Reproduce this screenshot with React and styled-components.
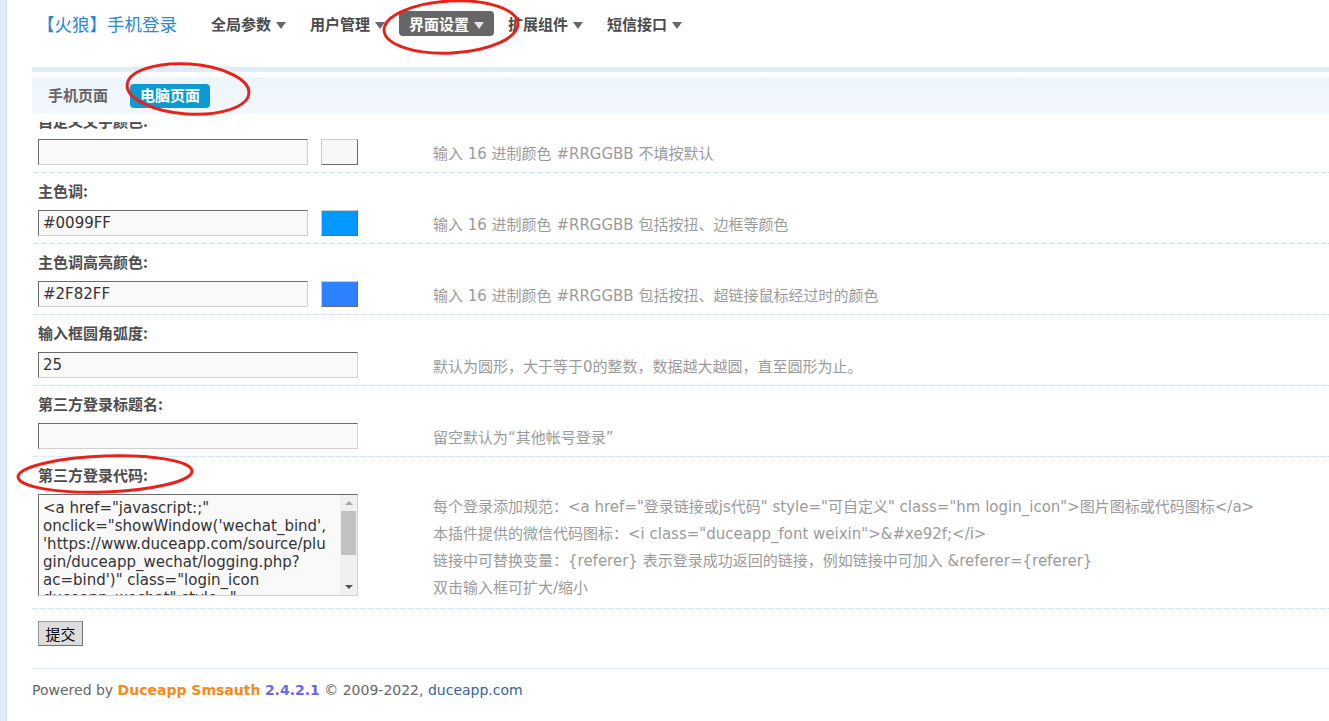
import React from 'react'
import styled, { createGlobalStyle } from 'styled-components'

const CJK = '"Noto Sans CJK SC", sans-serif'
const VERDANA = '"DejaVu Sans", "Noto Sans CJK SC", sans-serif'

const GlobalStyle = createGlobalStyle`
	html, body {
		margin: 0;
		padding: 0;
		background: #fff;
		font-family: ${CJK};
	}
	* { box-sizing: border-box; }
`

const NAV = ['全局参数', '用户管理', '界面设置', '扩展组件', '短信接口']

const CODE_LINES = [
	'<a href="javascript:;"',
	'onclick="showWindow(\'wechat_bind\',',
	'\'https://www.duceapp.com/source/plu',
	'gin/duceapp_wechat/logging.php?',
	'ac=bind\')" class="login_icon',
	'duceapp_wechat" style="',
]

const CODE_TIPS = [
	'每个登录添加规范：<a href="登录链接或js代码" style="可自定义" class="hm login_icon">图片图标或代码图标</a>',
	'本插件提供的微信代码图标：<i class="duceapp_font weixin">&#xe92f;</i>',
	'链接中可替换变量：{referer} 表示登录成功返回的链接，例如链接中可加入 &referer={referer}',
	'双击输入框可扩大/缩小',
]

const App = () => (
	<Page>
		<GlobalStyle />
		<SideStrip />
		<Main>
			<Header>
				<Logo>【火狼】手机登录</Logo>
				<Nav>
					{NAV.map((label) => (
						<NavItem key={label} active={label === '界面设置'}>
							{label}
							<Caret active={label === '界面设置'} />
						</NavItem>
					))}
				</Nav>
			</Header>
			<BlueBar />
			<SubTabs>
				<SubTab>手机页面</SubTab>
				<SubTab active>电脑页面</SubTab>
			</SubTabs>

			<Form>
				<Row>
					<ClipLabel>
						<span>自定义文字颜色:</span>
					</ClipLabel>
					<FieldLine>
						<InputCell>
							<TextInput narrow />
							<Swatch color="#f7f7f7" />
						</InputCell>
						<Tip>输入 16 进制颜色 #RRGGBB 不填按默认</Tip>
					</FieldLine>
				</Row>
				<Row>
					<Label>主色调:</Label>
					<FieldLine>
						<InputCell>
							<TextInput narrow>#0099FF</TextInput>
							<Swatch color="#0099ff" />
						</InputCell>
						<Tip>输入 16 进制颜色 #RRGGBB 包括按扭、边框等颜色</Tip>
					</FieldLine>
				</Row>
				<Row>
					<Label>主色调高亮颜色:</Label>
					<FieldLine>
						<InputCell>
							<TextInput narrow>#2F82FF</TextInput>
							<Swatch color="#2f82ff" />
						</InputCell>
						<Tip>输入 16 进制颜色 #RRGGBB 包括按扭、超链接鼠标经过时的颜色</Tip>
					</FieldLine>
				</Row>
				<Row>
					<Label>输入框圆角弧度:</Label>
					<FieldLine>
						<InputCell>
							<TextInput>25</TextInput>
						</InputCell>
						<Tip>默认为圆形，大于等于0的整数，数据越大越圆，直至圆形为止。</Tip>
					</FieldLine>
				</Row>
				<Row>
					<Label>第三方登录标题名:</Label>
					<FieldLine>
						<InputCell>
							<TextInput />
						</InputCell>
						<Tip>留空默认为“其他帐号登录”</Tip>
					</FieldLine>
				</Row>
				<Row tall>
					<Label>第三方登录代码:</Label>
					<FieldLine top>
						<CodeBox>
							<Code>
								{CODE_LINES.map((line, i) => (
									<div key={i}>{line}</div>
								))}
							</Code>
							<ScrollTrack>
								<ScrollArrow up />
								<Thumb />
								<ScrollArrow />
							</ScrollTrack>
						</CodeBox>
						<TipList>
							{CODE_TIPS.map((tip, i) => (
								<div key={i}>{tip}</div>
							))}
						</TipList>
					</FieldLine>
				</Row>
			</Form>

			<SubmitBar>
				<SubmitButton>提交</SubmitButton>
			</SubmitBar>

			<Footer>
				Powered by <Brand>Duceapp Smsauth</Brand> <Version>2.4.2.1</Version> © 2009-2022,{' '}
				<FooterLink>duceapp.com</FooterLink>
			</Footer>
		</Main>

		<Marks viewBox="0 0 1329 721">
			<ellipse cx="451" cy="27" rx="67" ry="26" transform="rotate(-3 451 27)" />
			<ellipse cx="188" cy="89" rx="61" ry="25" transform="rotate(4 188 89)" />
			<ellipse cx="105" cy="474" rx="87" ry="18" transform="rotate(-2 105 474)" />
		</Marks>
	</Page>
)

const Page = styled.div`
	position: relative;
	display: flex;
	min-height: 721px;
	overflow: hidden;
`

const SideStrip = styled.div`
	width: 7px;
	flex: none;
	background: #deedf9;
	border-right: 1px solid #d0e3f3;
`

const Main = styled.div`
	flex: 1;
	padding-left: 25px;
	min-width: 0;
`

const Header = styled.div`
	display: flex;
	align-items: center;
	height: 47px;
	padding-left: 5px;
`

const Logo = styled.div`
	font-size: 17.5px;
	color: #2a88d2;
	white-space: nowrap;
`

const Nav = styled.div`
	display: flex;
	margin-left: 24px;
`

const NavItem = styled.div`
	display: flex;
	align-items: center;
	height: 25px;
	padding: 0 10px;
	margin-right: 4px;
	border-radius: 4px;
	font-size: 15px;
	font-weight: 700;
	color: ${(p) => (p.active ? '#fff' : '#4a4a4a')};
	background: ${(p) => (p.active ? '#666' : 'transparent')};
`

const Caret = styled.span`
	margin-left: 5px;
	margin-top: 3px;
	width: 0;
	height: 0;
	border-left: 5px solid transparent;
	border-right: 5px solid transparent;
	border-top: 7px solid ${(p) => (p.active ? '#e6e6e6' : '#666')};
`

const BlueBar = styled.div`
	height: 5px;
	margin-top: 20px;
	background: #deedf9;
`

const SubTabs = styled.div`
	display: flex;
	align-items: center;
	gap: 12px;
	height: 37px;
	margin-top: 5px;
	margin-bottom: 8px;
	padding-left: 6px;
	background: linear-gradient(#edf5fc, #f2f8fd);
`

const SubTab = styled.div`
	height: 24px;
	line-height: 22px;
	padding: 0 10px;
	border-radius: 4px;
	font-size: 15px;
	font-weight: 700;
	color: ${(p) => (p.active ? '#fff' : '#666')};
	background: ${(p) => (p.active ? '#0b9bd2' : 'transparent')};
`

const Form = styled.div``

const Row = styled.div`
	padding: 0 0 ${(p) => (p.tall ? '6px' : '7px')} 6px;
	border-bottom: 1px dotted #c9e0f2;
`

const Label = styled.div`
	padding-top: 8px;
	line-height: 20px;
	font-size: 15px;
	font-weight: 700;
	color: #4d4d4d;
`

const ClipLabel = styled(Label)`
	padding-top: 0;
	height: 8px;
	overflow: hidden;
	& > span {
		display: block;
		margin-top: -11px;
	}
`

const FieldLine = styled.div`
	display: grid;
	grid-template-columns: 395px 1fr;
	align-items: ${(p) => (p.top ? 'start' : 'center')};
	margin-top: 9px;
`

const InputCell = styled.div`
	display: flex;
	gap: 13px;
`

const TextInput = styled.div`
	width: ${(p) => (p.narrow ? '270px' : '320px')};
	height: 26px;
	padding: 0 4px;
	line-height: 24px;
	background: #f9f9f9;
	border: 1px solid;
	border-color: #6b6b6b #cfcfcf #cfcfcf #6b6b6b;
	font-family: ${VERDANA};
	font-size: 15px;
	color: #333;
`

const Swatch = styled.div`
	width: 37px;
	height: 26px;
	background: ${(p) => p.color};
	border: 1px solid;
	border-color: #c9c9c9 #6b6b6b #6b6b6b #c9c9c9;
`

const Tip = styled.div`
	font-family: ${VERDANA};
	font-size: 15px;
	color: #9b9b9b;
	white-space: nowrap;
`

const TipList = styled(Tip)`
	line-height: 27px;
`

const CodeBox = styled.div`
	display: flex;
	width: 320px;
	height: 102px;
	background: #f9f9f9;
	border: 1px solid;
	border-color: #6b6b6b #cfcfcf #cfcfcf #6b6b6b;
`

const Code = styled.div`
	flex: 1;
	overflow: hidden;
	padding: 4px 0 0 4px;
	font-family: ${VERDANA};
	font-size: 15px;
	line-height: 18px;
	color: #333;
	white-space: nowrap;
`

const ScrollTrack = styled.div`
	display: flex;
	flex-direction: column;
	align-items: center;
	width: 17px;
	flex: none;
	background: #f0f0f0;
	padding: 0 1px;
`

const ScrollArrow = styled.div`
	height: 16px;
	width: 100%;
	display: flex;
	align-items: center;
	justify-content: center;
	margin-top: ${(p) => (p.up ? '0' : 'auto')};
	&::before {
		content: '';
		width: 0;
		height: 0;
		border-left: 4px solid transparent;
		border-right: 4px solid transparent;
		${(p) => (p.up ? 'border-bottom: 4px solid #a3a3a3;' : 'border-top: 4px solid #505050;')}
	}
`

const Thumb = styled.div`
	width: 100%;
	height: 44px;
	background: #c1c1c1;
`

const SubmitBar = styled.div`
	padding: 12px 0 0 6px;
`

const SubmitButton = styled.div`
	width: 45px;
	height: 25px;
	line-height: 23px;
	text-align: center;
	font-size: 15px;
	color: #000;
	background: #dddddd;
	border: 1px solid;
	border-color: #9a9a9a #707070 #707070 #9a9a9a;
`

const Footer = styled.div`
	margin-top: 22px;
	padding-top: 11px;
	border-top: 1px solid #deedf9;
	font-family: ${VERDANA};
	font-size: 14px;
	line-height: 20px;
	color: #666;
	white-space: nowrap;
`

const Brand = styled.b`
	color: #f88a1c;
`

const Version = styled.b`
	color: #6767f0;
`

const FooterLink = styled.span`
	color: #336699;
`

const Marks = styled.svg`
	position: absolute;
	top: 0;
	left: 0;
	width: 1329px;
	height: 721px;
	pointer-events: none;
	fill: none;
	stroke: #e8221b;
	stroke-width: 3;
`

export default App
